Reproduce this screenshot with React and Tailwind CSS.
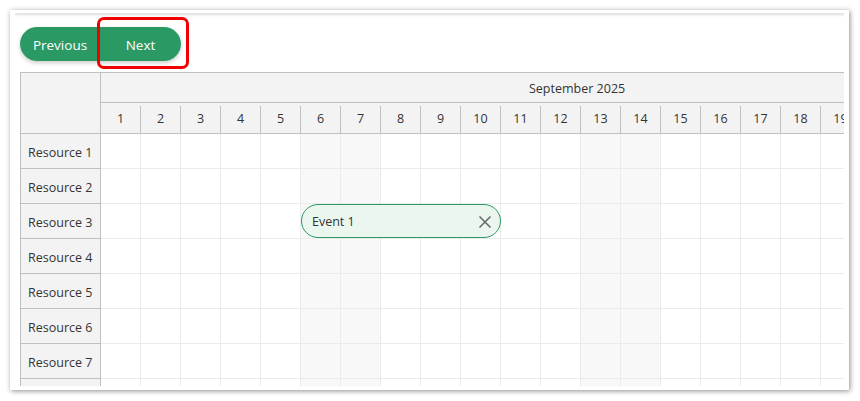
import React from 'react';

const days = Array.from({ length: 19 }, (_, i) => i + 1);
const resources = ['Resource 1', 'Resource 2', 'Resource 3', 'Resource 4', 'Resource 5', 'Resource 6', 'Resource 7', 'Resource 8'];
const weekend = [6, 7, 13, 14];

const App = () => {
    return (
        <div className="w-[860px] h-[401px] bg-white pt-[10px] pl-[10px] overflow-hidden" style={{ fontFamily: '"Open Sans", "Noto Sans", sans-serif' }}>
            <div className="w-[839px] h-[380px] bg-white shadow-[1px_1px_5px_rgba(0,0,0,0.45)] px-[5px] pt-[3px] pb-[4px] flex">
                <div className="flex-1 relative overflow-hidden shadow-[inset_0_4px_3px_-2px_rgba(0,0,0,0.13)] pt-[14px] pl-[5px]">
                    {/* navigation */}
                    <div className="flex">
                        <div className="flex h-[34px] rounded-full shadow-[0_2px_4px_rgba(0,0,0,0.2)] overflow-hidden">
                            <button className="w-[80px] h-full pt-[3px] bg-[#2a9964] text-white text-[13.5px] font-medium">Previous</button>
                            <button className="w-[81px] h-full pt-[3px] bg-[#2a9964] text-white text-[13.5px] font-medium">Next</button>
                        </div>
                    </div>

                    {/* highlight */}
                    <div className="absolute left-[82px] top-[4px] w-[92px] h-[52px] border-[3px] border-[#f00000] rounded-[7px]"></div>

                    {/* scheduler */}
                    <div className="mt-[11px] flex border-t border-l border-[#c0c0c0] text-[12.5px] text-[#333]">
                        <div className="w-[80px] shrink-0 border-r border-[#c0c0c0] bg-[#f3f3f3]">
                            <div className="h-[61px] border-b border-[#c0c0c0]"></div>
                            {resources.map((r) => (
                                <div key={r} className="h-[35px] pt-[5px] border-b border-[#c0c0c0] flex items-center pl-[7px]">{r}</div>
                            ))}
                        </div>
                        <div className="relative">
                            <div className="h-[30px] pt-[3px] border-b border-[#c0c0c0] bg-[#f3f3f3] flex items-center pl-[428px] whitespace-nowrap">September 2025</div>
                            <div className="h-[31px] pt-[3px] border-b border-[#c0c0c0] bg-[#f3f3f3] flex">
                                {days.map((d) => (
                                    <div key={d} className="w-[40px] shrink-0 border-r border-[#c0c0c0] flex items-center justify-center">{d}</div>
                                ))}
                            </div>
                            {resources.map((r) => (
                                <div key={r} className="h-[35px] border-b border-[#ebebeb] flex">
                                    {days.map((d) => (
                                        <div key={d} className={`w-[40px] shrink-0 border-r border-[#ebebeb] ${weekend.includes(d) ? 'bg-[#f8f8f8]' : 'bg-white'}`}></div>
                                    ))}
                                </div>
                            ))}

                            {/* event */}
                            <div className="absolute left-0 top-[131px] ml-[200px] w-[200px] h-[34px] pt-[3px] rounded-full border border-[#2a9964] bg-[#ebf7ee] flex items-center justify-between pl-[10px] pr-[8px]">
                                <span>Event 1</span>
                                <svg width="14" height="14" viewBox="0 0 14 14" fill="none" stroke="#666" strokeWidth="1.5" className="-mt-[2px]">
                                    <path d="M1.5 1.5 12.5 12.5M12.5 1.5 1.5 12.5" />
                                </svg>
                            </div>
                        </div>
                    </div>
                </div>
            </div>
        </div>
    );
};

export default App;
